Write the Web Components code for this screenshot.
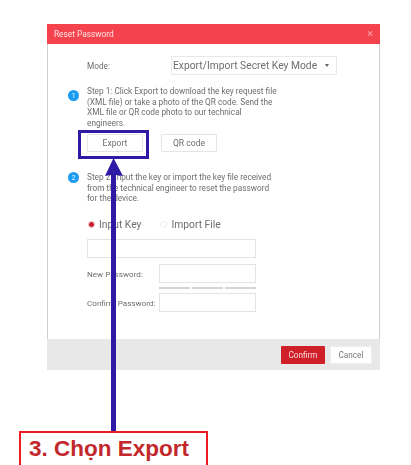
<!DOCTYPE html>
<html>
<head>
<meta charset="utf-8">
<style>
  html, body { margin: 0; padding: 0; background: #fff; }
  body { width: 411px; height: 465px; overflow: hidden; position: relative; font-family: Roboto, "Noto Sans", sans-serif; }
</style>
</head>
<body>
<guide-page>
  <reset-dialog heading="Reset Password">
    <mode-row label="Mode:" value="Export/Import Secret Key Mode"></mode-row>
    <step-block num="1" style="--nt:3.5px">Step 1: Click Export to download the key request file<br>(XML file) or take a photo of the QR code. Send the<br>XML file or QR code photo to our technical<br>engineers.</step-block>
    <button-row></button-row>
    <step-block num="2" style="--nt:0px;margin-top:20px">Step 2: Input the key or import the key file received<br>from the technical engineer to reset the password<br>for the device.</step-block>
    <key-form></key-form>
  </reset-dialog>
</guide-page>

<script>
class GuidePage extends HTMLElement {
  constructor() {
    super();
    this.attachShadow({ mode: "open" });
    this.shadowRoot.innerHTML = `
      <style>
        :host { display: block; width: 411px; height: 465px; position: relative; padding: 24px 0 0 47px; box-sizing: border-box; filter: blur(0.3px); }
        .box { position: absolute; left: 78px; top: 130px; width: 71px; height: 29px; box-sizing: border-box; border: 3px solid #2f1aa6; }
        .arrow { position: absolute; left: 100px; top: 157px; }
        .callout {
          position: absolute; left: 19px; top: 431px; width: 189px; height: 40px; box-sizing: border-box;
          border: 2.5px solid #ee1c20; background: #fff; padding: 2px 0 0 8px;
          font: bold 22.5px/28px "Liberation Sans", Arial, sans-serif; color: #c2272b; white-space: nowrap;
        }
      </style>
      <slot></slot>
      <div class="box"></div>
      <svg class="arrow" width="28" height="276" viewBox="0 0 28 276">
        <path d="M13.5 1 L23 19 L16 18 V275 H11 V18 L5 19 Z" fill="#2f1aa6"/>
      </svg>
      <div class="callout">3. Chọn Export</div>
    `;
  }
}

class ResetDialog extends HTMLElement {
  constructor() {
    super();
    this.attachShadow({ mode: "open" });
    this.shadowRoot.innerHTML = `
      <style>
        :host { display: flex; flex-direction: column; width: 333px; height: 346px; color: #6e6e6e; font-size: 8.27px; }
        .title {
          height: 20px; background: #f5434e; color: #fde3e3; font-size: 8.3px; line-height: 20px;
          padding: 0 7px 0 7px; display: flex; justify-content: space-between; align-items: center; flex: none;
        }
        .main { flex: 1; border: solid #cfcfcf; border-width: 0 1px; padding: 12px 0 0 19px; }
        .foot {
          flex: none; height: 31px; background: #e8e8e8; display: flex; justify-content: flex-end;
          align-items: center; gap: 5px; padding: 0 8px 0 0; box-sizing: border-box;
        }
        button { font: inherit; font-size: 8.2px; height: 18px; border-radius: 1px; padding: 0; }
        .ok { width: 44px; background: #cf1f29; border: 0; color: #f9dcdc; }
        .no { width: 42px; background: #fff; border: 1px solid #eee; color: #777; }
      </style>
      <div class="title"><span id="h"></span><span style="color:#f9a3a7;font-size:11px">×</span></div>
      <div class="main"><slot></slot></div>
      <div class="foot"><button class="ok">Confirm</button><button class="no">Cancel</button></div>
    `;
    this.shadowRoot.getElementById("h").textContent = this.getAttribute("heading");
  }
}

class ModeRow extends HTMLElement {
  constructor() {
    super();
    this.attachShadow({ mode: "open" });
    this.shadowRoot.innerHTML = `
      <style>
        :host { display: flex; align-items: center; height: 19px; margin-left: 20px; }
        .lab { width: 84px; }
        .sel {
          width: 166px; height: 19px; box-sizing: border-box; border: 1px solid #e8e8e8; padding: 0 7px 0 1px;
          display: flex; justify-content: space-between; align-items: center; font-size: 10.3px; color: #6e6e6e; white-space: nowrap;
        }
        .car { width: 0; height: 0; border: 2.5px solid transparent; border-top: 3px solid #666; border-bottom: 0; }
      </style>
      <span class="lab"></span>
      <div class="sel"><span class="val"></span><i class="car"></i></div>
    `;
    this.shadowRoot.querySelector(".lab").textContent = this.getAttribute("label");
    this.shadowRoot.querySelector(".val").textContent = this.getAttribute("value");
  }
}

class StepBlock extends HTMLElement {
  constructor() {
    super();
    this.attachShadow({ mode: "open" });
    this.shadowRoot.innerHTML = `
      <style>
        :host { display: flex; margin: 11px 0 0 1px; align-items: flex-start; }
        .num {
          flex: none; width: 11px; height: 11px; border-radius: 50%; background: #1a9cf2; color: #dff1fd;
          font-size: 7.5px; line-height: 11px; text-align: center; margin: var(--nt) 8px 0 0;
        }
        .txt { line-height: 10.5px; white-space: nowrap; }
      </style>
      <div class="num"></div>
      <div class="txt"><slot></slot></div>
    `;
    this.shadowRoot.querySelector(".num").textContent = this.getAttribute("num");
  }
}

class ButtonRow extends HTMLElement {
  constructor() {
    super();
    this.attachShadow({ mode: "open" });
    this.shadowRoot.innerHTML = `
      <style>
        :host { display: flex; gap: 18px; margin: 6px 0 0 20px; }
        button { font: inherit; font-size: 8.6px; color: #6e6e6e; background: #fff; height: 18px; width: 56px; padding: 0; border: 1px solid #e4e4e4; border-radius: 1px; }
      </style>
      <button>Export</button><button>QR code</button>
    `;
  }
}

class KeyForm extends HTMLElement {
  constructor() {
    super();
    this.attachShadow({ mode: "open" });
    this.shadowRoot.innerHTML = `
      <style>
        :host { display: block; margin: 12.5px 0 0 20px; width: 169px; font-size: 8.1px; }
        .radios { display: flex; align-items: center; height: 16px; font-size: 10.3px; color: #6e6e6e; }
        .dot { width: 7px; height: 7px; border-radius: 50%; border: 1px solid #e8e8e8; margin: 0 4px 0 1px; box-sizing: border-box; }
        .dot.on { background: #c8202c; border: 1px solid #f4cfd2; }
        .rad2 { margin-left: 19px; }
        .inp { display: block; height: 19px; box-sizing: border-box; border: 1px solid #e4e4e4; background: #fff; }
        .row { display: flex; align-items: center; justify-content: space-between; white-space: nowrap; }
        .row .inp { width: 97px; }
        .bars { display: flex; gap: 2px; margin: 4px 0 4px 72px; }
        .bars i { flex: 1; height: 2px; background: #d4d4d4; }
      </style>
      <div class="radios"><i class="dot on"></i><span>Input Key</span><i class="dot rad2"></i><span>Import File</span></div>
      <div class="inp" style="margin:7px 0 6px"></div>
      <div class="row"><span>New Password:</span><div class="inp"></div></div>
      <div class="bars"><i></i><i></i><i></i></div>
      <div class="row"><span>Confirm Password:</span><div class="inp"></div></div>
    `;
  }
}

customElements.define("guide-page", GuidePage);
customElements.define("reset-dialog", ResetDialog);
customElements.define("mode-row", ModeRow);
customElements.define("step-block", StepBlock);
customElements.define("button-row", ButtonRow);
customElements.define("key-form", KeyForm);
</script>
</body>
</html>
